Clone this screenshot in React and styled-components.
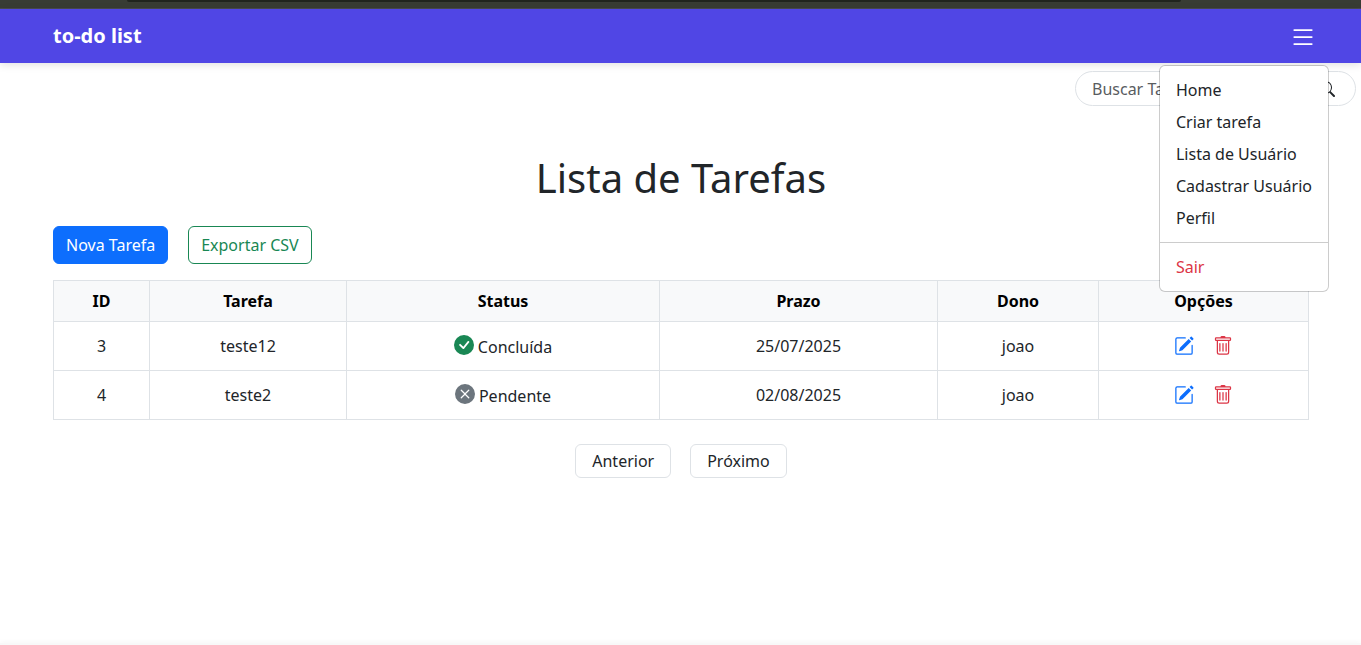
import React from "react";
import styled, { createGlobalStyle, css } from "styled-components";
import {
  BsCheckCircleFill,
  BsList,
  BsPencilSquare,
  BsSearch,
  BsTrash,
  BsXCircleFill,
} from "react-icons/bs";

const GlobalStyle = createGlobalStyle`
  *, *::before, *::after { box-sizing: border-box; }
  body {
    margin: 0;
    background: #fff;
    color: #212529;
    font: 400 16px/24px "Noto Sans", sans-serif;
  }
  button, input { font: inherit; color: inherit; margin: 0; }
  a { color: inherit; text-decoration: none; }
`;

const Page = styled.div`
  display: flex;
  flex-direction: column;
  min-height: 100vh;
`;

const WindowEdge = styled.div`
  height: 9px;
  padding: 0 180px 0 127px;
  background: #383c34;
  border-bottom: 1px solid #494a50;
`;

const AddressBarEdge = styled.div`
  height: 2px;
  background: #20241e;
  border-radius: 0 0 6px 6px;
`;

const Navbar = styled.header`
  position: relative;
  z-index: 2;
  display: flex;
  align-items: center;
  justify-content: space-between;
  height: 54px;
  padding: 0 32px 0 53px;
  background: #5046e5;
  box-shadow: 0 2px 8px rgba(0, 0, 0, 0.12);
`;

const Brand = styled.a`
  color: #fff;
  font-size: 20px;
  font-weight: 700;
  line-height: 30px;
`;

const MenuWrap = styled.nav`
  position: relative;
`;

const MenuToggle = styled.button`
  display: flex;
  padding: 8px 12px 6px;
  border: 0;
  background: transparent;
  color: #fff;
  cursor: pointer;
`;

const Menu = styled.ul`
  position: absolute;
  top: 100%;
  right: 0;
  margin: 8px 0 0;
  padding: 8px 0;
  list-style: none;
  white-space: nowrap;
  background: #fff;
  background-clip: padding-box;
  border: 1px solid rgba(0, 0, 0, 0.2);
  border-radius: 6px;
`;

const MenuLink = styled.a`
  display: block;
  padding: 4px 16px;
  color: ${({ $danger }) => ($danger ? "#dc3545" : "#212529")};
`;

const MenuDivider = styled.li`
  margin: 8px 0;
  border-top: 1px solid rgba(0, 0, 0, 0.2);
`;

const SearchForm = styled.form`
  display: flex;
  align-self: flex-end;
  width: 281px;
  height: 35px;
  margin: 8px 5px 0 0;
  overflow: hidden;
  background: #fff;
  border: 1px solid #dee2e6;
  border-radius: 18px;
`;

const SearchInput = styled.input`
  flex: 1;
  min-width: 0;
  padding: 0 16px;
  border: 0;
  outline: 0;
  background: transparent;
  &::placeholder { color: #595c5f; opacity: 1; }
`;

const SearchButton = styled.button`
  display: flex;
  align-items: center;
  padding: 0 20px 0 12px;
  border: 0;
  background: transparent;
`;

const Content = styled.main`
  flex: 1;
  padding: 48px 52px 24px 53px;
`;

const Title = styled.h1`
  margin: 0 0 24px;
  font-size: 40px;
  font-weight: 400;
  line-height: 48px;
  text-align: center;
`;

const Actions = styled.div`
  display: flex;
  gap: 20px;
  margin-bottom: 16px;
`;

const Button = styled.button`
  padding: 6px 12px;
  border: 1px solid #0d6efd;
  border-radius: 6px;
  background: #0d6efd;
  color: #fff;
  cursor: pointer;
  ${({ $variant }) =>
    $variant === "outline" &&
    css`
      border-color: #198754;
      background: transparent;
      color: #198754;
    `}
  ${({ $variant }) =>
    $variant === "pager" &&
    css`
      padding: 4px 16px;
      border-color: #dee2e6;
      background: #fff;
      color: #212529;
    `}
`;

const Table = styled.table`
  width: 100%;
  border-collapse: collapse;
  table-layout: fixed;
  text-align: center;
`;

const Column = styled.col`
  width: ${({ $share }) => $share}%;
`;

const HeadCell = styled.th`
  height: 41px;
  padding: 8px;
  border: 1px solid #dee2e6;
  background: #f8f9fa;
  color: #000;
  font-weight: 700;
`;

const Cell = styled.td`
  height: 49px;
  padding: 8px;
  border: 1px solid #dee2e6;
  background: #fff;
`;

const Status = styled.span`
  display: flex;
  align-items: flex-start;
  justify-content: center;
  gap: 4px;
  svg {
    margin-top: 2px;
    color: ${({ $done }) => ($done ? "#198754" : "#6c757d")};
  }
`;

const StatusText = styled.span`
  padding-top: 2px;
`;

const RowActions = styled.div`
  display: flex;
  align-items: center;
  justify-content: center;
  gap: 19px;
`;

const IconButton = styled.button`
  display: flex;
  padding: 0;
  border: 0;
  background: transparent;
  color: ${({ $danger }) => ($danger ? "#dc3545" : "#0d6efd")};
  cursor: pointer;
`;

const Pager = styled.nav`
  display: flex;
  justify-content: center;
  gap: 19px;
  margin-top: 24px;
`;

const Footer = styled.footer`
  height: 2px;
  background: #f8f8f8;
  box-shadow: 0 -1px 4px rgba(0, 0, 0, 0.06);
`;

const columns = [
  { label: "ID", share: 7.65 },
  { label: "Tarefa", share: 15.7 },
  { label: "Status", share: 24.94 },
  { label: "Prazo", share: 22.15 },
  { label: "Dono", share: 12.83 },
  { label: "Opções", share: 16.73 },
];

const tasks = [
  { id: 3, name: "teste12", done: true, due: "25/07/2025", owner: "joao" },
  { id: 4, name: "teste2", done: false, due: "02/08/2025", owner: "joao" },
];

const menuItems = ["Home", "Criar tarefa", "Lista de Usuário", "Cadastrar Usuário", "Perfil"];

function TaskRow({ task }) {
  return (
    <tr>
      <Cell>{task.id}</Cell>
      <Cell>{task.name}</Cell>
      <Cell>
        <Status $done={task.done}>
          {task.done ? <BsCheckCircleFill size={20} /> : <BsXCircleFill size={20} />}
          <StatusText>{task.done ? "Concluída" : "Pendente"}</StatusText>
        </Status>
      </Cell>
      <Cell>{task.due}</Cell>
      <Cell>{task.owner}</Cell>
      <Cell>
        <RowActions>
          <IconButton type="button" aria-label="Editar">
            <BsPencilSquare size={20} />
          </IconButton>
          <IconButton type="button" aria-label="Excluir" $danger>
            <BsTrash size={20} />
          </IconButton>
        </RowActions>
      </Cell>
    </tr>
  );
}

export default function App() {
  return (
    <>
      <GlobalStyle />
      <Page>
        <WindowEdge>
          <AddressBarEdge />
        </WindowEdge>
        <Navbar>
          <Brand href="#">to-do list</Brand>
          <MenuWrap>
            <MenuToggle type="button" aria-label="Menu" aria-expanded="true">
              <BsList size={28} />
            </MenuToggle>
            <Menu>
              {menuItems.map((item) => (
                <li key={item}>
                  <MenuLink href="#">{item}</MenuLink>
                </li>
              ))}
              <MenuDivider role="separator" />
              <li>
                <MenuLink href="#" $danger>Sair</MenuLink>
              </li>
            </Menu>
          </MenuWrap>
        </Navbar>
        <SearchForm role="search">
          <SearchInput type="search" placeholder="Buscar Tarefa" aria-label="Buscar Tarefa" />
          <SearchButton type="button" aria-label="Buscar">
            <BsSearch size={16} />
          </SearchButton>
        </SearchForm>
        <Content>
          <Title>Lista de Tarefas</Title>
          <Actions>
            <Button type="button">Nova Tarefa</Button>
            <Button type="button" $variant="outline">Exportar CSV</Button>
          </Actions>
          <Table>
            <colgroup>
              {columns.map((column) => (
                <Column key={column.label} $share={column.share} />
              ))}
            </colgroup>
            <thead>
              <tr>
                {columns.map((column) => (
                  <HeadCell key={column.label} scope="col">{column.label}</HeadCell>
                ))}
              </tr>
            </thead>
            <tbody>
              {tasks.map((task) => (
                <TaskRow key={task.id} task={task} />
              ))}
            </tbody>
          </Table>
          <Pager aria-label="Paginação">
            <Button type="button" $variant="pager">Anterior</Button>
            <Button type="button" $variant="pager">Próximo</Button>
          </Pager>
        </Content>
        <Footer />
      </Page>
    </>
  );
}
